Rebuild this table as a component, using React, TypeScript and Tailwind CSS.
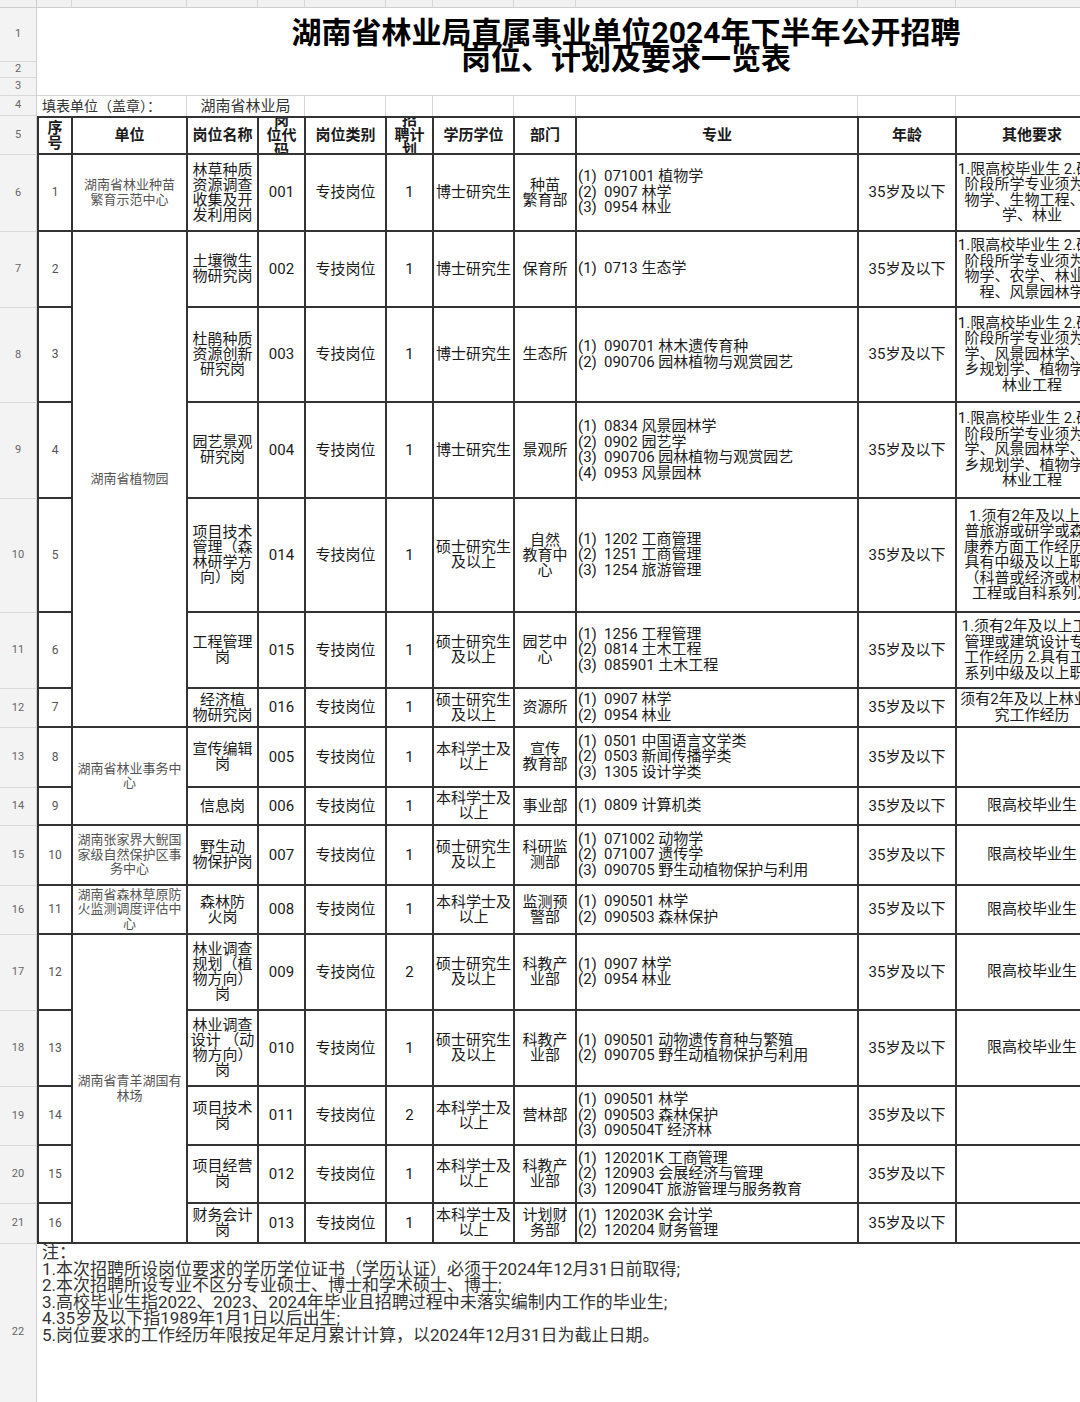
type Row = {
  no: string;
  unit: { lines: string[]; span: number } | null;
  name: string[];
  code: string;
  cnt: string;
  edu: string[];
  dept: string[];
  major: string[];
  other: string[];
};

const bs = "1.限高校毕业生 2.硕士";

const rows: Row[] = [
  {
    no: "1",
    unit: { lines: ["湖南省林业种苗", "繁育示范中心"], span: 1 },
    name: ["林草种质", "资源调查", "收集及开", "发利用岗"],
    code: "001",
    cnt: "1",
    edu: ["博士研究生"],
    dept: ["种苗", "繁育部"],
    major: ["071001 植物学", "0907 林学", "0954 林业"],
    other: [bs, "阶段所学专业须为植", "物学、生物工程、林", "学、林业"],
  },
  {
    no: "2",
    unit: { lines: ["湖南省植物园"], span: 6 },
    name: ["土壤微生", "物研究岗"],
    code: "002",
    cnt: "1",
    edu: ["博士研究生"],
    dept: ["保育所"],
    major: ["0713 生态学"],
    other: [bs, "阶段所学专业须为植", "物学、农学、林业工", "程、风景园林学"],
  },
  {
    no: "3",
    unit: null,
    name: ["杜鹃种质", "资源创新", "研究岗"],
    code: "003",
    cnt: "1",
    edu: ["博士研究生"],
    dept: ["生态所"],
    major: ["090701 林木遗传育种", "090706 园林植物与观赏园艺"],
    other: [bs, "阶段所学专业须为林", "学、风景园林学、城", "乡规划学、植物学、", "林业工程"],
  },
  {
    no: "4",
    unit: null,
    name: ["园艺景观", "研究岗"],
    code: "004",
    cnt: "1",
    edu: ["博士研究生"],
    dept: ["景观所"],
    major: ["0834 风景园林学", "0902 园艺学", "090706 园林植物与观赏园艺", "0953 风景园林"],
    other: [bs, "阶段所学专业须为林", "学、风景园林学、城", "乡规划学、植物学、", "林业工程"],
  },
  {
    no: "5",
    unit: null,
    name: ["项目技术", "管理（森", "林研学方", "向）岗"],
    code: "014",
    cnt: "1",
    edu: ["硕士研究生", "及以上"],
    dept: ["自然", "教育中", "心"],
    major: ["1202 工商管理", "1251 工商管理", "1254 旅游管理"],
    other: [
      "1.须有2年及以上科",
      "普旅游或研学或森林",
      "康养方面工作经历 2.",
      "具有中级及以上职称",
      "（科普或经济或林业",
      "工程或自科系列）",
    ],
  },
  {
    no: "6",
    unit: null,
    name: ["工程管理", "岗"],
    code: "015",
    cnt: "1",
    edu: ["硕士研究生", "及以上"],
    dept: ["园艺中", "心"],
    major: ["1256 工程管理", "0814 土木工程", "085901 土木工程"],
    other: ["1.须有2年及以上工程", "管理或建筑设计专业", "工作经历 2.具有工程", "系列中级及以上职称"],
  },
  {
    no: "7",
    unit: null,
    name: ["经济植", "物研究岗"],
    code: "016",
    cnt: "1",
    edu: ["硕士研究生", "及以上"],
    dept: ["资源所"],
    major: ["0907 林学", "0954 林业"],
    other: ["须有2年及以上林业研", "究工作经历"],
  },
  {
    no: "8",
    unit: { lines: ["湖南省林业事务中", "心"], span: 2 },
    name: ["宣传编辑", "岗"],
    code: "005",
    cnt: "1",
    edu: ["本科学士及", "以上"],
    dept: ["宣传", "教育部"],
    major: ["0501 中国语言文学类", "0503 新闻传播学类", "1305 设计学类"],
    other: [],
  },
  {
    no: "9",
    unit: null,
    name: ["信息岗"],
    code: "006",
    cnt: "1",
    edu: ["本科学士及", "以上"],
    dept: ["事业部"],
    major: ["0809 计算机类"],
    other: ["限高校毕业生"],
  },
  {
    no: "10",
    unit: { lines: ["湖南张家界大鲵国", "家级自然保护区事", "务中心"], span: 1 },
    name: ["野生动", "物保护岗"],
    code: "007",
    cnt: "1",
    edu: ["硕士研究生", "及以上"],
    dept: ["科研监", "测部"],
    major: ["071002 动物学", "071007 遗传学", "090705 野生动植物保护与利用"],
    other: ["限高校毕业生"],
  },
  {
    no: "11",
    unit: { lines: ["湖南省森林草原防", "火监测调度评估中", "心"], span: 1 },
    name: ["森林防", "火岗"],
    code: "008",
    cnt: "1",
    edu: ["本科学士及", "以上"],
    dept: ["监测预", "警部"],
    major: ["090501 林学", "090503 森林保护"],
    other: ["限高校毕业生"],
  },
  {
    no: "12",
    unit: { lines: ["湖南省青羊湖国有", "林场"], span: 5 },
    name: ["林业调查", "规划（植", "物方向）", "岗"],
    code: "009",
    cnt: "2",
    edu: ["硕士研究生", "及以上"],
    dept: ["科教产", "业部"],
    major: ["0907 林学", "0954 林业"],
    other: ["限高校毕业生"],
  },
  {
    no: "13",
    unit: null,
    name: ["林业调查", "设计 （动", "物方向）", "岗"],
    code: "010",
    cnt: "1",
    edu: ["硕士研究生", "及以上"],
    dept: ["科教产", "业部"],
    major: ["090501 动物遗传育种与繁殖", "090705 野生动植物保护与利用"],
    other: ["限高校毕业生"],
  },
  {
    no: "14",
    unit: null,
    name: ["项目技术", "岗"],
    code: "011",
    cnt: "2",
    edu: ["本科学士及", "以上"],
    dept: ["营林部"],
    major: ["090501 林学", "090503 森林保护", "090504T 经济林"],
    other: [],
  },
  {
    no: "15",
    unit: null,
    name: ["项目经营", "岗"],
    code: "012",
    cnt: "1",
    edu: ["本科学士及", "以上"],
    dept: ["科教产", "业部"],
    major: ["120201K 工商管理", "120903 会展经济与管理", "120904T 旅游管理与服务教育"],
    other: [],
  },
  {
    no: "16",
    unit: null,
    name: ["财务会计", "岗"],
    code: "013",
    cnt: "1",
    edu: ["本科学士及", "以上"],
    dept: ["计划财", "务部"],
    major: ["120203K 会计学", "120204 财务管理"],
    other: [],
  },
];

const spanClass: Record<number, string> = {
  1: "",
  2: "row-span-2",
  5: "row-span-5",
  6: "row-span-6",
};

const rowNums: [string, number][] = [
  ["1", 54], ["2", 16], ["3", 18], ["4", 20], ["5", 39], ["6", 77], ["7", 76],
  ["8", 95], ["9", 96], ["10", 114], ["11", 76], ["12", 39], ["13", 60],
  ["14", 38], ["15", 60], ["16", 49], ["17", 76], ["18", 76], ["19", 59],
  ["20", 58], ["21", 40], ["22", 178],
];

const stripCols = [35, 115, 71, 47, 81, 47, 81, 62, 282, 98, 152, 107];

const notes = [
  "注：",
  "1.本次招聘所设岗位要求的学历学位证书（学历认证）必须于2024年12月31日前取得;",
  "2.本次招聘所设专业不区分专业硕士、博士和学术硕士、博士;",
  "3.高校毕业生指2022、2023、2024年毕业且招聘过程中未落实编制内工作的毕业生;",
  "4.35岁及以下指1989年1月1日以后出生;",
  "5.岗位要求的工作经历年限按足年足月累计计算，以2024年12月31日为截止日期。",
];

function Cell({ children, className = "" }: { children?: React.ReactNode; className?: string }) {
  return (
    <div
      className={
        "flex items-center justify-center text-center overflow-hidden border-r-2 border-b-2 border-[#333] " +
        className
      }
    >
      {children}
    </div>
  );
}

function Lines({ lines }: { lines: string[] }) {
  return (
    <div>
      {lines.map((l, i) => (
        <div key={i} className="whitespace-nowrap">
          {l}
        </div>
      ))}
    </div>
  );
}

export default function App() {
  return (
    <div className="w-[1080px] h-[1402px] overflow-hidden bg-white text-[#1a1a1a] font-['Roboto','Noto_Sans_CJK_SC',sans-serif]">
      {/* column header strip */}
      <div className="flex h-[8px] w-[1300px] bg-[#f1f1f1] border-b border-[#cfcfcf]">
        <div className="w-[37px] shrink-0 border-r border-[#cfcfcf]" />
        {stripCols.map((w, i) => (
          <div key={i} className="shrink-0 border-r border-[#d6d6d6]" style={{ width: w }} />
        ))}
      </div>

      <div className="flex">
        {/* row numbers */}
        <div className="w-[37px] shrink-0 bg-[#f3f3f3] border-r border-[#cfcfcf]">
          {rowNums.map(([n, h]) => (
            <div
              key={n}
              className="flex items-center justify-center border-b border-[#d9d9d9] text-[11px] text-[#666]"
              style={{ height: h }}
            >
              {n}
            </div>
          ))}
        </div>

        <div className="w-[1178px] shrink-0">
          {/* title rows 1-3 */}
          <div className="h-[88px] border-b border-[#d6d6d6] pt-[12px] text-center text-[30px] leading-[26px] font-bold text-black">
            <div>湖南省林业局直属事业单位2024年下半年公开招聘</div>
            <div>岗位、计划及要求一览表</div>
          </div>

          {/* row 4 */}
          <div className="flex h-[20px] text-[#333]">
            <div className="w-[150px] shrink-0 border-r border-[#d6d6d6] pl-[5px] text-[14px] leading-[20px] whitespace-nowrap">
              填表单位（盖章）：
            </div>
            <div className="w-[118px] shrink-0 border-r border-[#d6d6d6] text-center text-[15px] leading-[20px]">
              湖南省林业局
            </div>
            {[81, 47, 81, 62, 282, 98, 152].map((w, i) => (
              <div key={i} className="shrink-0 border-r border-[#d6d6d6]" style={{ width: w }} />
            ))}
          </div>

          {/* main table */}
          <div className="grid w-max grid-cols-[34px_115px_71px_47px_81px_47px_81px_62px_282px_98px_152px] grid-rows-[37px_77px_76px_95px_96px_114px_76px_39px_60px_38px_60px_49px_76px_76px_59px_58px_40px] border-l-2 border-t-2 border-[#333] text-[15px] leading-[15px]">
            <Cell className="font-bold">
              <Lines lines={["序", "号"]} />
            </Cell>
            <Cell className="font-bold">单位</Cell>
            <Cell className="font-bold">岗位名称</Cell>
            <Cell className="font-bold">
              <Lines lines={["岗", "位代", "码"]} />
            </Cell>
            <Cell className="font-bold">岗位类别</Cell>
            <Cell className="font-bold">
              <Lines lines={["招", "聘计", "划"]} />
            </Cell>
            <Cell className="font-bold">学历学位</Cell>
            <Cell className="font-bold">部门</Cell>
            <Cell className="font-bold">专业</Cell>
            <Cell className="font-bold">年龄</Cell>
            <Cell className="font-bold">其他要求</Cell>

            {rows.map((r) => [
              <Cell key={r.no + "a"} className="text-[12px] text-[#555]">
                {r.no}
              </Cell>,
              r.unit ? (
                <Cell
                  key={r.no + "b"}
                  className={"text-[13px] leading-[14.5px] text-[#555] " + spanClass[r.unit.span]}
                >
                  <Lines lines={r.unit.lines} />
                </Cell>
              ) : null,
              <Cell key={r.no + "c"}>
                <Lines lines={r.name} />
              </Cell>,
              <Cell key={r.no + "d"}>{r.code}</Cell>,
              <Cell key={r.no + "e"}>专技岗位</Cell>,
              <Cell key={r.no + "f"}>{r.cnt}</Cell>,
              <Cell key={r.no + "g"}>
                <Lines lines={r.edu} />
              </Cell>,
              <Cell key={r.no + "h"}>
                <Lines lines={r.dept} />
              </Cell>,
              <Cell key={r.no + "i"} className="justify-start text-left pl-[1px] leading-[15.5px]">
                <div>
                  {r.major.map((m, i) => (
                    <div key={i} className="flex whitespace-nowrap">
                      <span className="inline-block w-[26px] shrink-0">({i + 1})</span>
                      <span>{m}</span>
                    </div>
                  ))}
                </div>
              </Cell>,
              <Cell key={r.no + "j"}>35岁及以下</Cell>,
              <Cell key={r.no + "k"} className="leading-[15.5px]">
                <Lines lines={r.other} />
              </Cell>,
            ])}
          </div>

          {/* notes row 22 */}
          <div className="pl-[5px] text-[17px] leading-[16.5px] text-[#333]">
            {notes.map((n, i) => (
              <div key={i} className="whitespace-nowrap">
                {n}
              </div>
            ))}
          </div>
        </div>
      </div>
    </div>
  );
}
